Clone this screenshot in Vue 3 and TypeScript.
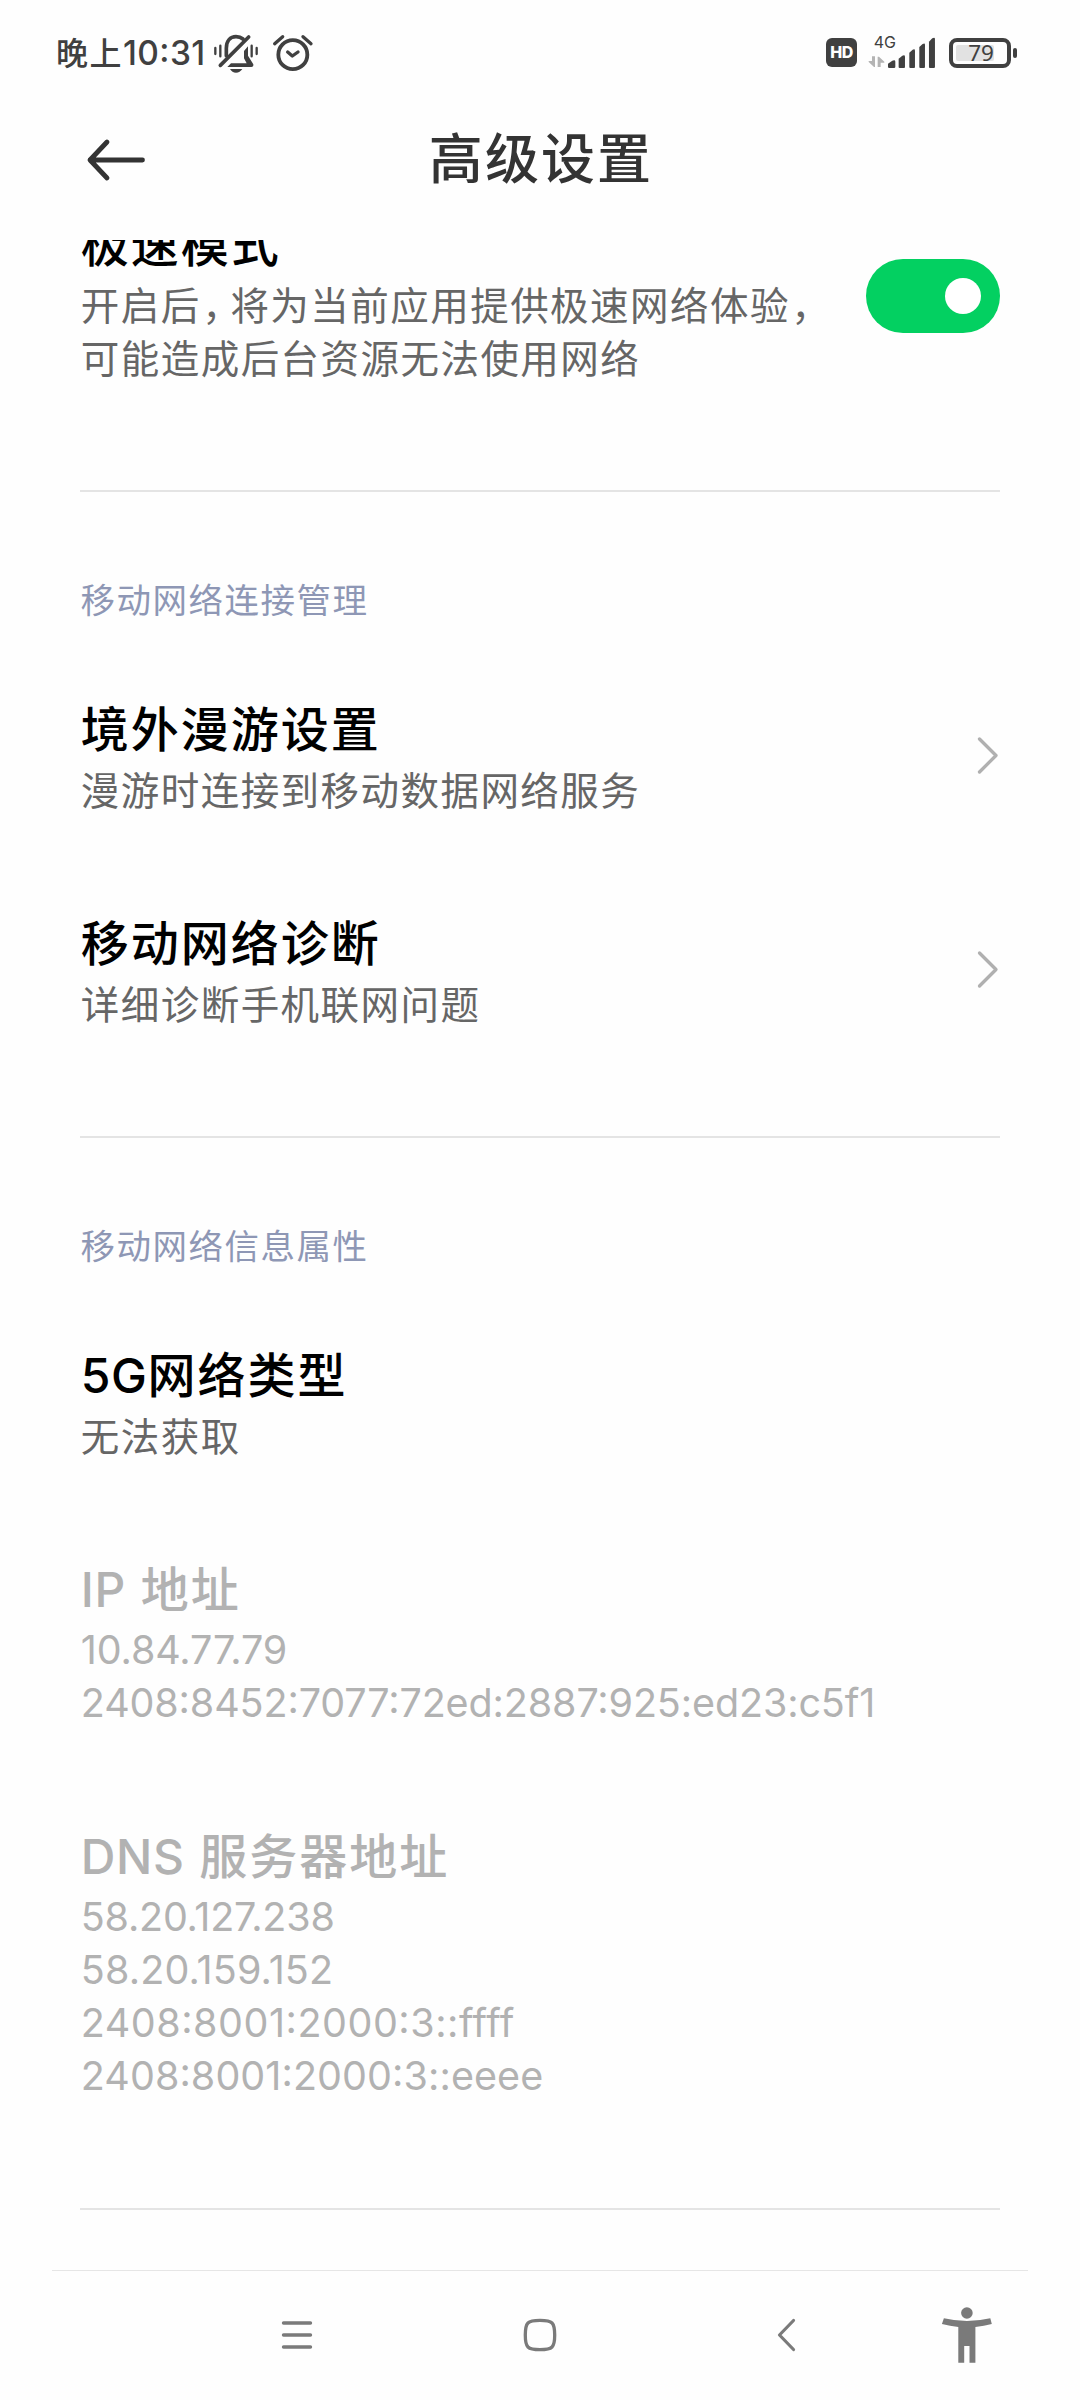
<script setup lang="ts">
interface SettingItem {
  title: string
  lines: string[]
  tracking?: number[]
  action?: 'toggle' | 'chevron'
  muted?: boolean
}

interface SettingGroup {
  header?: string
  items: SettingItem[]
}

const groups: SettingGroup[] = [
  {
    items: [
      {
        title: '极速模式',
        lines: ['开启后，将为当前应用提供极速网络体验，', '可能造成后台资源无法使用网络'],
        action: 'toggle',
      },
    ],
  },
  {
    header: '移动网络连接管理',
    items: [
      { title: '境外漫游设置', lines: ['漫游时连接到移动数据网络服务'], action: 'chevron' },
      { title: '移动网络诊断', lines: ['详细诊断手机联网问题'], action: 'chevron' },
    ],
  },
  {
    header: '移动网络信息属性',
    items: [
      { title: '5G网络类型', lines: ['无法获取'] },
      {
        title: 'IP 地址',
        lines: ['10.84.77.79', '2408:8452:7077:72ed:2887:925:ed23:c5f1'],
        tracking: [-0.13, -0.13],
        muted: true,
      },
      {
        title: 'DNS 服务器地址',
        lines: ['58.20.127.238', '58.20.159.152', '2408:8001:2000:3::ffff', '2408:8001:2000:3::eeee'],
        tracking: [-0.23, 0.14, 0.52, 0.07],
        muted: true,
      },
    ],
  },
]

// Full-width commas are set narrower than the ideographs around them.
const pieces = (line: string): string[] => line.split(/(，)/).filter((p) => p.length > 0)

const titlePieces = (title: string): string[] => title.split(/([A-Z0-9]+)/).filter((p) => p.length > 0)
const isLatin = (p: string): boolean => /^[A-Z0-9]+$/.test(p)

const lineStyle = (item: SettingItem, n: number) =>
  item.tracking ? { letterSpacing: `${item.tracking[n]}px` } : undefined
</script>

<template>
  <div class="screen">
    <header class="status">
      <div class="status-left">
        <span class="clock"><span class="clock-cjk">晚上</span>10:31</span>
        <svg class="bell" viewBox="516 60 144 132" width="48" height="44">
          <g fill="none" stroke="#404040" stroke-linecap="round">
            <path d="M559 134V112C559 90 571 77 588 77C597 77 603 79 609 84" stroke-width="11" />
            <path d="M541 163L626 78" stroke-width="11" />
            <path d="M526 111V129M650 111V129" stroke-width="7" />
            <path d="M541 104V136M635 104V136" stroke-width="7" />
          </g>
          <path d="M612 120L624 106V134L640 160Q641 168 634 168H562L573 157H620L612 142Z" fill="#404040" />
          <path d="M570 174H607Q600 185 588 185Q576 185 570 174Z" fill="#404040" />
        </svg>
        <svg class="alarm" viewBox="692 62 132 126" width="44" height="42">
          <g fill="none" stroke="#404040" stroke-linecap="round" stroke-linejoin="round">
            <circle cx="757.500" cy="130" r="43.500" stroke-width="11.500" />
            <path d="M742 122L756 134L773 122" stroke-width="10" />
            <path d="M703 97L727 76M788 76L812 97" stroke-width="10" />
          </g>
        </svg>
      </div>
      <div class="status-right">
        <span class="hd">HD</span>
        <div class="signal">
          <span class="net">4G</span>
          <svg class="bars" viewBox="200 80 208 96" width="69.300" height="32">
            <g fill="#b4b4b4">
              <path d="M219 138H224V170H221L205 155V152H215V138Z" />
              <path d="M232 170V139H236L252 154V157H241V170Z" />
            </g>
            <g fill="#404040">
              <path d="M263 170V160L276 151Q285 147 285 154V170Q285 173 281 173H267Q263 173 263 170Z" />
              <path d="M295 170V145L306 136Q314 132 314 139V170Q314 173 311 173H298Q295 173 295 170Z" />
              <path d="M327 170V127L337 118Q344 114 344 121V170Q344 173 341 173H330Q327 173 327 170Z" />
              <path d="M357 170V110L367 101Q374 97 374 103V170Q374 173 371 173H360Q357 173 357 170Z" />
              <path d="M386 170V94L396 84Q404 80 404 86V170Q404 173 401 173H389Q386 173 386 170Z" />
            </g>
          </svg>
        </div>
        <div class="battery">
          <div class="cell"><span class="level">79</span></div>
          <i class="tip"></i>
        </div>
      </div>
    </header>

    <div class="titlebar">
      <svg class="back" viewBox="0 0 62 44" width="62" height="44">
        <path d="M23 4L6 22L23 40M6 22H58.500" fill="none" stroke="#333" stroke-width="4.800" stroke-linecap="round" stroke-linejoin="round" />
      </svg>
      <h1>高级设置</h1>
      <span class="side"></span>
    </div>

    <main class="viewport">
      <div class="list">
        <section v-for="(group, g) in groups" :key="g" class="group">
          <h2 v-if="group.header">{{ group.header }}</h2>
          <div v-for="item in group.items" :key="item.title" class="item" :class="{ muted: item.muted }">
            <div class="text">
              <div class="title"><span v-for="(p, i) in titlePieces(item.title)" :key="i" :class="{ latin: isLatin(p) }">{{ p }}</span></div>
              <div v-for="(line, n) in item.lines" :key="line" class="line" :style="lineStyle(item, n)"><span v-for="(p, i) in pieces(line)" :key="i" :class="{ comma: p === '，' }">{{ p }}</span></div>
            </div>
            <div v-if="item.action === 'toggle'" class="toggle"><i></i></div>
            <svg v-else-if="item.action === 'chevron'" class="chevron" viewBox="0 0 24 40" width="24" height="40">
              <path d="M3.500 3L20 19.500L3.500 36" fill="none" stroke="#b0b0b0" stroke-width="3.300" stroke-linecap="round" stroke-linejoin="round" />
            </svg>
          </div>
        </section>
      </div>
    </main>

    <nav class="navbar">
      <svg class="nav-menu" viewBox="0 0 32 34" width="32" height="34">
        <path d="M2.500 5H29.500M2.500 17H29.500M2.500 29H29.500" stroke="#7a7a7a" stroke-width="3.400" stroke-linecap="round" />
      </svg>
      <svg class="nav-home" viewBox="0 0 34 34" width="34" height="34">
        <path d="M17 2.300C29.500 2.300 31.700 4.500 31.700 17S29.500 31.700 17 31.700S2.300 29.500 2.300 17S4.500 2.300 17 2.300Z" fill="none" stroke="#7a7a7a" stroke-width="3.300" />
      </svg>
      <svg class="nav-back" viewBox="0 0 20 34" width="20" height="34">
        <path d="M17.500 2.500L3.500 17L17.500 31.500" fill="none" stroke="#7a7a7a" stroke-width="3.200" stroke-linecap="round" stroke-linejoin="round" />
      </svg>
      <svg class="nav-person" viewBox="0 0 54 60" width="54" height="60">
        <circle cx="26.900" cy="8" r="5.800" fill="#7a7a7a" />
        <path d="M3.900 13.300Q26.900 18.700 50.300 13.300L51.800 19Q44 21.200 35.400 22V57.700H29.500V41H24.200V57.700H18.300V22Q10 21.200 1.900 19Z" fill="#7a7a7a" />
      </svg>
    </nav>
  </div>
</template>

<style>
html,
body {
  background: #fefefe;
}
</style>

<style scoped>
.screen {
  width: 1080px;
  height: 2400px;
  display: flex;
  flex-direction: column;
  overflow: hidden;
  background: #fefefe;
  font-family: Inter, 'Noto Sans CJK SC', sans-serif;
  font-feature-settings: 'calt' 1;
}

.status {
  height: 104px;
  box-sizing: border-box;
  padding: 0 63px 0 56px;
  display: flex;
  justify-content: space-between;
  color: #404040;
}

.status-left,
.status-right {
  display: flex;
  align-items: center;
  height: 105px;
}

.clock {
  font-size: 33.5px;
  font-weight: 500;
  letter-spacing: 0.4px;
  line-height: 50px;
  white-space: nowrap;
  width: 148px;
  padding-top: 2px;
}

.clock-cjk {
  font-size: 32px;
  letter-spacing: 1.5px;
}

.bell {
  margin-left: 8px;
}

.alarm {
  margin-left: 10.7px;
}

.hd {
  width: 31px;
  height: 29px;
  border-radius: 6px;
  background: #404040;
  color: #fff;
  font-size: 16px;
  font-weight: 800;
  letter-spacing: -0.5px;
  line-height: 29px;
  text-align: center;
}

.signal {
  display: flex;
  position: relative;
  margin-left: 9.7px;
}

.net {
  position: absolute;
  left: 7px;
  top: -5px;
  font-size: 16px;
  line-height: 20px;
}

.battery {
  display: flex;
  align-items: center;
  margin-left: 13px;
}

.cell {
  width: 62px;
  height: 30px;
  box-sizing: border-box;
  border: 4px solid #404040;
  border-radius: 8px;
  padding: 3px;
  display: flex;
}

.level {
  flex: none;
  width: 38px;
  height: 16px;
  background: #e2e2e2;
  font-family: 'Noto Sans', sans-serif;
  font-size: 22.5px;
  line-height: 16px;
  text-align: right;
  border-radius: 2px;
}

.tip {
  width: 4px;
  height: 10px;
  margin-left: 2px;
  border-radius: 2px;
  background: #404040;
}

.titlebar {
  height: 136px;
  flex: none;
  box-sizing: border-box;
  padding: 0 82px 24px 84px;
  display: flex;
  align-items: center;
  justify-content: space-between;
}

.side {
  width: 62px;
}

h1 {
  margin: 0;
  font-size: 54px;
  font-weight: 500;
  letter-spacing: 2.1px;
  line-height: 80px;
  color: #333;
}

.viewport {
  height: 2030px;
  flex: none;
  overflow: hidden;
}

.list {
  margin: -76px 80px 0;
}

.group {
  border-bottom: 2px solid #e4e4e4;
  padding-bottom: 59px;
}

h2 {
  margin: 0;
  height: 157px;
  box-sizing: border-box;
  padding-top: 84px;
  padding-left: 0.5px;
  font-size: 34.5px;
  font-weight: 400;
  letter-spacing: 1.5px;
  line-height: 50px;
  color: #8e97b5;
}

.item {
  display: flex;
  align-items: center;
  justify-content: space-between;
  padding: 47px 0;
  color: #666;
}

.text {
  padding-left: 0.8px;
  white-space: pre;
}

.title {
  height: 68px;
  line-height: 67px;
  font-size: 48px;
  font-weight: 500;
  letter-spacing: 2px;
  color: #000;
}

.latin {
  font-weight: 550;
  letter-spacing: 0.6px;
}

.line {
  height: 53px;
  line-height: 54px;
  font-size: 38.5px;
  letter-spacing: 1.46px;
}

.line:last-child {
  height: 52px;
}

.comma {
  font-feature-settings: 'halt' 1;
  margin: 0 7.5px 0 1.5px;
}

.muted .line {
  font-size: 39.5px;
  line-height: 52px;
}

.muted,
.muted .title {
  color: #b2b2b2;
}

.toggle {
  width: 134px;
  height: 74px;
  box-sizing: border-box;
  padding: 19px;
  border-radius: 37px;
  background: #03d061;
  display: flex;
  justify-content: flex-end;
  margin-top: -3px;
}

.toggle i {
  width: 36px;
  height: 36px;
  border-radius: 50%;
  background: #fff;
}

.navbar {
  height: 130px;
  margin: 0 52px;
  box-sizing: border-box;
  border-top: 1px solid #e6e6e6;
  padding-left: 229px;
  padding-bottom: 2px;
  display: flex;
  align-items: center;
}

.nav-home {
  margin-left: 210px;
}

.nav-back {
  margin-left: 219px;
}

.nav-person {
  margin-left: 144px;
}
</style>
